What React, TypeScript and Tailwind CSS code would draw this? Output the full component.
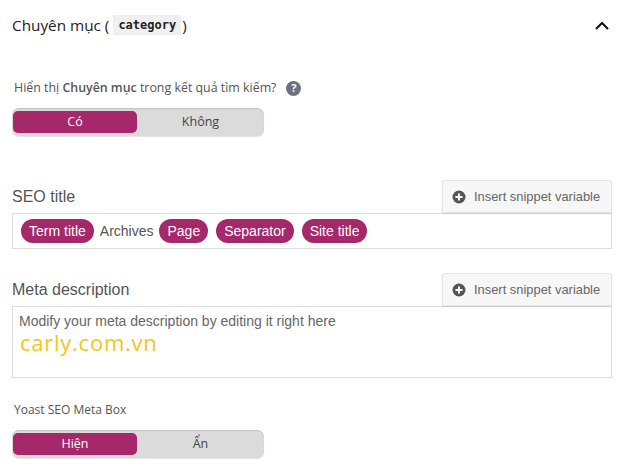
function Toggle({ on, off }: { on: string; off: string }) {
  return (
    <div className="flex h-[28px] w-[252px] rounded-[7px] bg-[#dbdbdb] py-[3px] pl-[1px] pr-[3px] shadow-[inset_0_1px_1px_rgba(0,0,0,0.12),0_1px_1px_rgba(0,0,0,0.12)]">
      <div className="flex w-[124px] items-center justify-center rounded-[5px] bg-[#a4286a] text-[12.5px] text-white">{on}</div>
      <div className="flex flex-1 items-center justify-center pl-[3px] text-[12.5px] text-[#444]">{off}</div>
    </div>
  )
}

function SnippetButton() {
  return (
    <button className="flex h-[33px] w-[170px] items-center gap-[8px] rounded-t-[3px] border border-[#e4e4e4] bg-[#f7f7f7] pl-[9px] text-[12.9px] text-[#666] shadow-[0_1px_1px_#ccc]">
      <svg width="14" height="14" viewBox="0 0 14 14">
        <circle cx="7" cy="7" r="6.5" fill="#555" />
        <path d="M7 3.4v7.2M3.4 7h7.2" stroke="#f7f7f7" strokeWidth="2" />
      </svg>
      Insert snippet variable
    </button>
  )
}

function Pill({ children }: { children: string }) {
  return <span className="rounded-full bg-[#a4286a] px-[8px] py-[3px] leading-[18px] text-white">{children}</span>
}

export default function App() {
  return (
    <div className="h-[473px] w-[625px] bg-white pl-[12px] pr-[13px] font-['Liberation_Sans',sans-serif] text-[#555]">
      <div className="flex h-[50px] items-center justify-between pr-[3px] font-['Open_Sans',sans-serif] text-[15.3px] text-[#222]">
        <div className="flex items-center">
          Chuyên mục (
          <code className="ml-[4px] bg-[#f0f0f0] px-[5px] py-[2px] font-['DejaVu_Sans_Mono',monospace] text-[12px] font-bold leading-[16px]">category</code>
          <span className="ml-[1px]">)</span>
        </div>
        <svg width="14" height="9" viewBox="0 0 14 9" fill="none" stroke="#111" strokeWidth="2">
          <path d="M1 8l6-6 6 6" />
        </svg>
      </div>

      <div className="mt-[29px] flex h-[18px] items-center pl-[2px] font-['Open_Sans',sans-serif] text-[12.4px] text-[#555]">
        <span>
          Hiển thị <b className="font-semibold">Chuyên mục</b> trong kết quả tìm kiếm?
        </span>
        <span className="ml-[10px] flex h-[15px] w-[15px] items-center justify-center rounded-full bg-[#6b7280] text-[11px] font-bold text-white">?</span>
      </div>
      <div className="mt-[11px] font-['Open_Sans',sans-serif]">
        <Toggle on="Có" off="Không" />
      </div>

      <div className="mt-[44px] flex items-end justify-between">
        <span className="mb-[7px] text-[16px] leading-[18px]">SEO title</span>
        <SnippetButton />
      </div>
      <div className="flex h-[36px] items-center border border-[#ddd] pl-[8px] text-[14px]">
        <Pill>Term title</Pill>
        <span className="mx-[6px]">Archives</span>
        <span className="flex items-center gap-[8px]">
          <Pill>Page</Pill>
          <Pill>Separator</Pill>
          <Pill>Site title</Pill>
        </span>
      </div>

      <div className="mt-[24px] flex items-end justify-between">
        <span className="mb-[7px] text-[16px] leading-[18px]">Meta description</span>
        <SnippetButton />
      </div>
      <div className="h-[72px] border border-[#ddd] pl-[6px] pt-[6px]">
        <div className="text-[14px] leading-[17px] text-[#666]">Modify your meta description by editing it right here</div>
        <div className="-mt-[1px] pl-[1px] font-['Open_Sans',sans-serif] text-[22px] leading-[26px] tracking-[0.75px] text-[#f5c518]">carly.com.vn</div>
      </div>

      <div className="mt-[23px] flex h-[18px] items-center pl-[2px] font-['Open_Sans',sans-serif] text-[12px] text-[#555]">Yoast SEO Meta Box</div>
      <div className="mt-[11px] font-['Open_Sans',sans-serif]">
        <Toggle on="Hiện" off="Ẩn" />
      </div>
    </div>
  )
}
